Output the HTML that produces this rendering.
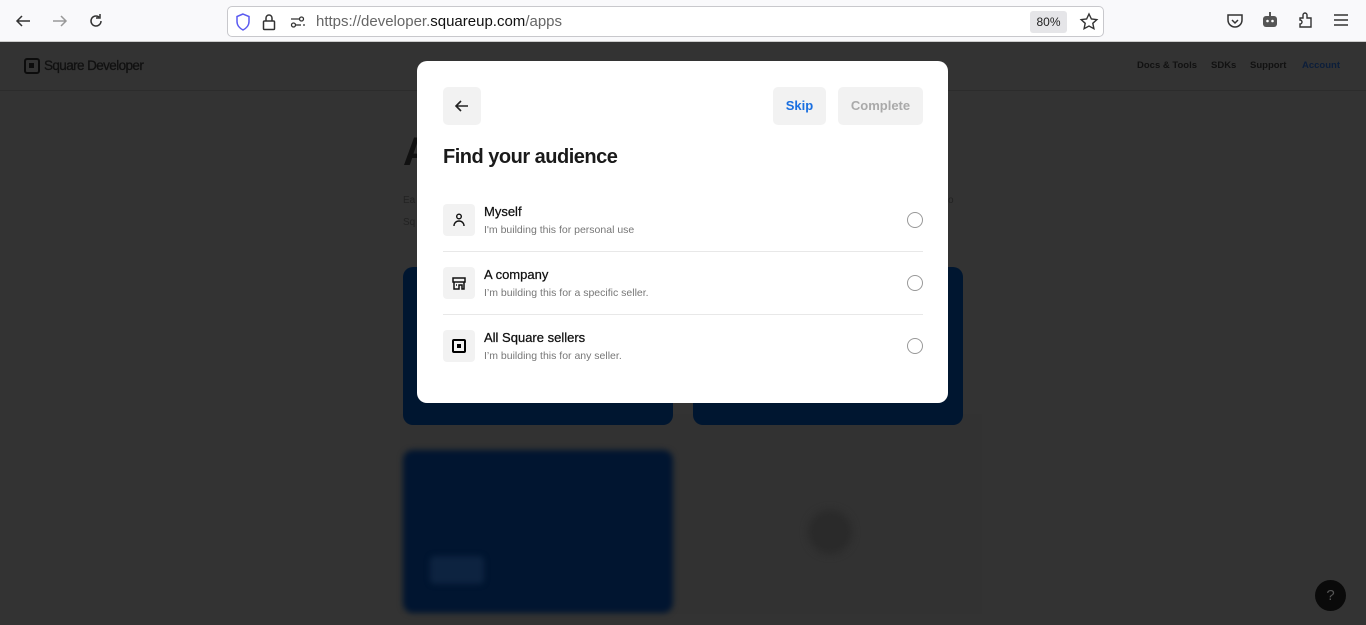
<!DOCTYPE html>
<html><head><meta charset="utf-8"><style>
*{box-sizing:border-box;margin:0;padding:0}
body{width:1366px;height:625px;overflow:hidden;font-family:"Liberation Sans",sans-serif;background:#333;position:relative}
.tb{position:absolute;left:0;top:0;width:1366px;height:42px;background:#f9f9fb;border-bottom:1px solid #ccc}
.url{position:absolute;left:227px;top:6px;width:877px;height:31px;border:1px solid #c8c8cc;border-radius:5px;background:#fff}
.abs{position:absolute}
.modal{position:absolute;left:417px;top:61px;width:531px;height:342px;background:#fff;border-radius:10px}
.btn{position:absolute;background:#f2f2f2;border-radius:5px;font-size:13px;font-weight:bold;text-align:center;line-height:38px}
.row{position:absolute;left:26px;width:480px;height:47px}
.ic{position:absolute;left:0;top:0;width:32px;height:32px;background:#f2f2f2;border-radius:4px}
.t1{position:absolute;left:41px;top:0px;font-size:13px;color:#111;-webkit-text-stroke:0.25px #111}
.t2{position:absolute;left:41px;top:20px;font-size:10.5px;color:#777}
.rad{position:absolute;right:0;top:8px;width:16px;height:16px;border:1px solid #999;border-radius:50%}
.sep{position:absolute;left:0;top:47px;width:480px;height:1px;background:#e8e8e8}
.nav{position:absolute;top:60px;font-size:9.5px;font-weight:bold;color:#111}
</style></head><body>
<div class="tb">
<svg class="abs" style="left:14px;top:12px" width="18" height="18" viewBox="0 0 18 18" fill="none" stroke="#333" stroke-width="1.5"><path d="M16 9H3M8 4L3 9l5 5"/></svg>
<svg class="abs" style="left:51px;top:12px" width="18" height="18" viewBox="0 0 18 18" fill="none" stroke="#999" stroke-width="1.5"><path d="M2 9h13M10 4l5 5-5 5"/></svg>
<svg class="abs" style="left:87px;top:12px" width="18" height="18" viewBox="0 0 18 18" fill="none" stroke="#333" stroke-width="1.5"><path d="M14 9a5 5 0 1 1-2-4M13 2v4H9"/></svg>
<div class="url">
<svg class="abs" style="left:7px;top:6px" width="16" height="18" viewBox="0 0 16 18" fill="none" stroke="#5a5af0" stroke-width="1.5"><path d="M8 1L2 3.5v5c0 4 3 7 6 8.5 3-1.5 6-4.5 6-8.5v-5z"/></svg>
<svg class="abs" style="left:34px;top:6px" width="14" height="18" viewBox="0 0 14 18" fill="none" stroke="#333" stroke-width="1.5"><rect x="1.5" y="8" width="11" height="8.5" rx="1"/><path d="M4 8V5a3 3 0 0 1 6 0v3"/></svg>
<svg class="abs" style="left:62px;top:9px" width="16" height="12" viewBox="0 0 16 12" fill="none" stroke="#333" stroke-width="1.3"><path d="M1 3h8M13 9h2"/><circle cx="11.5" cy="3" r="2"/><circle cx="3.5" cy="9" r="2"/><path d="M6 9h5"/></svg>
<div class="abs" style="left:88px;top:6px;font-size:15px;color:#666">https://developer.<span style="color:#111">squareup.com</span>/apps</div>
<div class="abs" style="left:802px;top:4px;width:37px;height:22px;background:#e5e5e8;border-radius:3px;font-size:12px;line-height:22px;text-align:center;color:#222">80%</div>
<svg class="abs" style="left:851px;top:5px" width="20" height="20" viewBox="0 0 20 20" fill="none" stroke="#333" stroke-width="1.4"><path d="M10 2l2.4 5 5.4.6-4 3.7 1.1 5.4L10 14l-4.9 2.7 1.1-5.4-4-3.7 5.4-.6z"/></svg>
</div>
<svg class="abs" style="left:1226px;top:12px" width="18" height="18" viewBox="0 0 18 18" fill="none" stroke="#333" stroke-width="1.5"><path d="M2 3h14v5a7 7 0 0 1-14 0z"/><path d="M6 8l3 3 3-3"/></svg>
<svg class="abs" style="left:1261px;top:11px" width="18" height="18" viewBox="0 0 18 18"><rect x="2" y="5" width="14" height="11" rx="3" fill="#555"/><rect x="8" y="1" width="2" height="4" fill="#555"/><circle cx="6.5" cy="10" r="1.3" fill="#fff"/><circle cx="11.5" cy="10" r="1.3" fill="#fff"/></svg>
<svg class="abs" style="left:1297px;top:11px" width="18" height="18" viewBox="0 0 18 18" fill="none" stroke="#333" stroke-width="1.4"><path d="M3 7h3V4a2 2 0 0 1 4 0v3h4v9H3v-3a2 2 0 0 0 0-4z"/></svg>
<svg class="abs" style="left:1333px;top:13px" width="16" height="14" viewBox="0 0 16 14" stroke="#333" stroke-width="1.5"><path d="M1 2h14M1 7h14M1 12h14"/></svg>
</div>
<!-- page -->
<div class="abs" style="left:24px;top:58px;width:16px;height:16px;border:2.5px solid #0c0c0c;border-radius:3px"><div style="margin:3px;width:5px;height:5px;background:#0c0c0c"></div></div>
<div class="abs" style="left:44px;top:58px;font-size:13.5px;color:#111;letter-spacing:-0.6px;-webkit-text-stroke:0.3px #111">Square Developer</div>
<div class="nav" style="left:1137px">Docs &amp; Tools</div>
<div class="nav" style="left:1211px">SDKs</div>
<div class="nav" style="left:1250px">Support</div>
<div class="nav" style="left:1302px;color:#0c1e3a">Account</div>
<div class="abs" style="left:0;top:90px;width:1366px;height:1px;background:#2c2c2c"></div>
<div class="abs" style="left:403px;top:130px;font-size:40px;font-weight:bold;color:#111">A</div>
<div class="abs" style="left:403px;top:195px;font-size:10px;color:#222">Ea</div>
<div class="abs" style="left:403px;top:217px;font-size:10px;color:#222">Sq</div>
<div class="abs" style="left:948px;top:195px;font-size:10px;color:#222">o</div>
<div class="abs" style="left:400px;top:414px;width:582px;height:200px;background:#323232"></div>
<div class="abs" style="left:403px;top:267px;width:270px;height:158px;background:#001630;border-radius:10px"></div>
<div class="abs" style="left:693px;top:267px;width:270px;height:158px;background:#001630;border-radius:10px"></div>
<div class="abs" style="left:403px;top:450px;width:270px;height:163px;background:#011530;border-radius:10px;filter:blur(3px)"></div>
<div class="abs" style="left:430px;top:556px;width:54px;height:28px;background:#0d2340;border-radius:5px;filter:blur(3px)"></div>
<div class="abs" style="left:808px;top:510px;width:44px;height:44px;background:#2a2a2a;border-radius:50%;filter:blur(4px)"></div>
<div class="abs" style="left:1315px;top:580px;width:31px;height:31px;background:#0a0a0a;border-radius:50%;color:#555;font-size:15px;text-align:center;line-height:31px">?</div>
<!-- modal -->
<div class="modal">
<div class="btn" style="left:26px;top:26px;width:38px;height:38px">
<svg style="margin-top:11px" width="16" height="16" viewBox="0 0 16 16" fill="none" stroke="#222" stroke-width="1.6"><path d="M14 8H2M7 3L2 8l5 5"/></svg></div>
<div class="btn" style="left:356px;top:26px;width:53px;height:38px;color:#1a6fe0">Skip</div>
<div class="btn" style="left:421px;top:26px;width:85px;height:38px;color:#aaa">Complete</div>
<div class="abs" style="left:26px;top:85px;font-size:20px;font-weight:bold;color:#1a1a1a;letter-spacing:-0.5px">Find your audience</div>
<div class="row" style="top:143px"><div class="ic"><svg style="margin:8px" width="16" height="16" viewBox="0 0 16 16" fill="none" stroke="#111" stroke-width="1.4"><circle cx="8" cy="4.5" r="2.3"/><path d="M3 14c0-3 2.2-5 5-5s5 2 5 5"/></svg></div>
<div class="t1">Myself</div><div class="t2">I'm building this for personal use</div><div class="rad"></div><div class="sep"></div></div>
<div class="row" style="top:206px"><div class="ic"><svg style="margin:8px" width="16" height="16" viewBox="0 0 16 16" fill="none" stroke="#111" stroke-width="1.5"><path d="M2 3h12v4H2zM3 7v7h5v-4h3v4h2V7M5 10h1"/></svg></div>
<div class="t1">A company</div><div class="t2">I’m building this for a specific seller.</div><div class="rad"></div><div class="sep"></div></div>
<div class="row" style="top:269px"><div class="ic"><div style="position:absolute;left:9px;top:9px;width:14px;height:14px;border:2.5px solid #000;border-radius:2px"><div style="margin:2.5px;width:4px;height:4px;background:#000"></div></div></div>
<div class="t1">All Square sellers</div><div class="t2">I’m building this for any seller.</div><div class="rad"></div></div>
</div>
</body></html>
